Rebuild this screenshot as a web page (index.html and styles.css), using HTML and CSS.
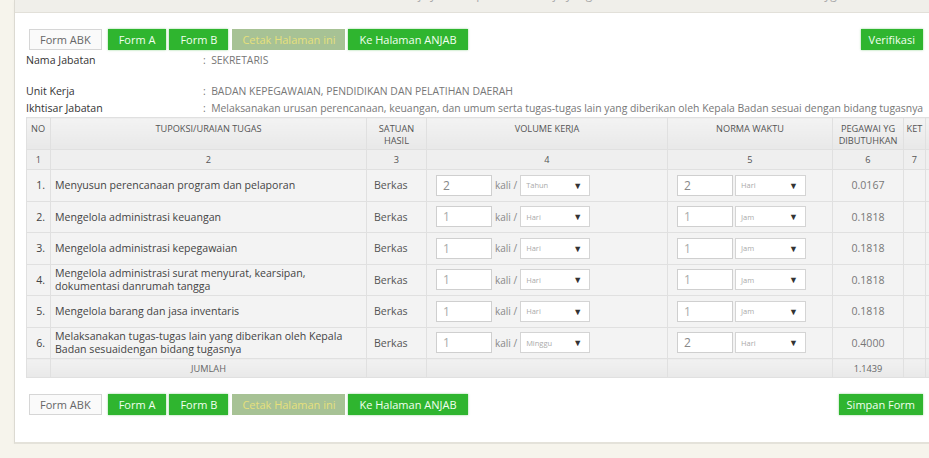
FILE: index.html
```html
<!DOCTYPE html>
<html lang="id">
<head>
  <meta charset="UTF-8">
  <title>Form ABK</title>
  <link rel="stylesheet" href="styles.css">
</head>
<body>
  <div class="panel">
    <div class="panel-head">
      <span class="head-title">Analisis Beban Kerja Jabatan pada Unit Kerja yang berlaku</span>
      <span class="head-right">Halaman ABK yg</span>
    </div>

    <div class="panel-body">
      <div class="toolbar">
        <div class="btn-group">
          <button class="btn btn-light">Form ABK</button>
          <button class="btn btn-green">Form A</button>
          <button class="btn btn-green">Form B</button>
          <button class="btn btn-muted">Cetak Halaman ini</button>
          <button class="btn btn-green">Ke Halaman ANJAB</button>
        </div>
        <button class="btn btn-green btn-side">Verifikasi</button>
      </div>

      <div class="info">
        <div class="info-row">
          <span class="info-label">Nama Jabatan</span>
          <span class="info-value">: &nbsp;SEKRETARIS</span>
        </div>
        <div class="info-row gap-top">
          <span class="info-label">Unit Kerja</span>
          <span class="info-value">: &nbsp;BADAN KEPEGAWAIAN, PENDIDIKAN DAN PELATIHAN DAERAH</span>
        </div>
        <div class="info-row">
          <span class="info-label">Ikhtisar Jabatan</span>
          <span class="info-value">: &nbsp;Melaksanakan urusan perencanaan, keuangan, dan umum serta tugas-tugas lain yang diberikan oleh Kepala Badan sesuai dengan bidang tugasnya</span>
        </div>
      </div>

      <table class="abk-table">
        <colgroup>
          <col style="width:24px">
          <col style="width:316px">
          <col style="width:60px">
          <col style="width:241px">
          <col style="width:165px">
          <col style="width:71px">
          <col style="width:22px">
          <col style="width:30px">
        </colgroup>
        <thead>
          <tr class="head-row">
            <th class="left">NO</th>
            <th>TUPOKSI/URAIAN TUGAS</th>
            <th>SATUAN<br>HASIL</th>
            <th>VOLUME KERJA</th>
            <th>NORMA WAKTU</th>
            <th>PEGAWAI YG<br>DIBUTUHKAN</th>
            <th>KET</th>
            <th></th>
          </tr>
          <tr class="num-row">
            <th>1</th>
            <th>2</th>
            <th>3</th>
            <th>4</th>
            <th>5</th>
            <th>6</th>
            <th>7</th>
            <th></th>
          </tr>
        </thead>
        <tbody id="rows"></tbody>
        <tfoot>
          <tr class="sum-row">
            <td></td>
            <td class="center">JUMLAH</td>
            <td></td>
            <td></td>
            <td></td>
            <td class="center">1.1439</td>
            <td></td>
            <td></td>
          </tr>
        </tfoot>
      </table>

      <div class="toolbar toolbar-bottom">
        <div class="btn-group">
          <button class="btn btn-light">Form ABK</button>
          <button class="btn btn-green">Form A</button>
          <button class="btn btn-green">Form B</button>
          <button class="btn btn-muted">Cetak Halaman ini</button>
          <button class="btn btn-green">Ke Halaman ANJAB</button>
        </div>
        <button class="btn btn-green btn-side">Simpan Form</button>
      </div>
    </div>
  </div>

  <script>
    const tugas = [
      { no: "1.", uraian: "Menyusun perencanaan program dan pelaporan", vol: "2", per: "Tahun", norma: "2", satuan: "Hari", pegawai: "0.0167", dark: true },
      { no: "2.", uraian: "Mengelola administrasi keuangan", vol: "1", per: "Hari", norma: "1", satuan: "Jam", pegawai: "0.1818" },
      { no: "3.", uraian: "Mengelola administrasi kepegawaian", vol: "1", per: "Hari", norma: "1", satuan: "Jam", pegawai: "0.1818" },
      { no: "4.", uraian: "Mengelola administrasi surat menyurat, kearsipan,<br>dokumentasi danrumah tangga", vol: "1", per: "Hari", norma: "1", satuan: "Jam", pegawai: "0.1818" },
      { no: "5.", uraian: "Mengelola barang dan jasa inventaris", vol: "1", per: "Hari", norma: "1", satuan: "Jam", pegawai: "0.1818" },
      { no: "6.", uraian: "Melaksanakan tugas-tugas lain yang diberikan oleh Kepala<br>Badan sesuaidengan bidang tugasnya", vol: "1", per: "Minggu", norma: "2", satuan: "Hari", pegawai: "0.4000", darkNorma: true }
    ];

    const rows = document.getElementById("rows");
    tugas.forEach(t => {
      const volClass = t.dark ? "field dark" : "field";
      const normaClass = (t.dark || t.darkNorma) ? "field dark" : "field";
      rows.innerHTML += `
        <tr>
          <td class="no">${t.no}</td>
          <td class="uraian">${t.uraian}</td>
          <td class="satuan">Berkas</td>
          <td class="vol">
            <div class="vol-wrap">
              <span class="${volClass}">${t.vol}</span>
              <span class="kali">kali /</span>
              <span class="select">${t.per}<span class="arrow">&#9660;</span></span>
            </div>
          </td>
          <td class="vol">
            <div class="vol-wrap">
              <span class="${normaClass}">${t.norma}</span>
              <span class="select wide">${t.satuan}<span class="arrow">&#9660;</span></span>
            </div>
          </td>
          <td class="center pegawai">${t.pegawai}</td>
          <td></td>
          <td></td>
        </tr>
      `;
    });
  </script>
</body>
</html>
```

FILE: styles.css
```css
body {
  margin: 0;
  background-color: #f6f4ec;
  font-family: 'Open Sans', 'Liberation Sans', sans-serif;
  font-size: 10.6px;
  color: #444;
  overflow: hidden;
}

.panel {
  margin-left: 14px;
  width: 960px;
  background-color: white;
  border-left: 1px solid #dcdad2;
  border-bottom: 2px solid #e4e2da;
  box-shadow: 0 2px 3px rgba(0, 0, 0, 0.04);
}

.panel-head {
  height: 12px;
  background-color: #f0efea;
  border-bottom: 1px solid #e2e0d9;
  overflow: hidden;
  position: relative;
  color: #aaa;
  font-size: 12px;
}

.head-title {
  position: absolute;
  left: 300px;
  top: -14px;
}

.head-right {
  position: absolute;
  left: 730px;
  top: -14px;
}

.panel-body {
  padding: 16px 0 27px 11px;
}

.toolbar {
  width: 897px;
  display: flex;
  justify-content: space-between;
  align-items: center;
}

.toolbar-bottom {
  margin-top: 16px;
}

.btn-group {
  display: flex;
  gap: 3px;
  padding-left: 3px;
}

.btn {
  font-family: 'Open Sans', 'Liberation Sans', sans-serif;
  font-size: 11px;
  line-height: 15px;
  height: 21px;
  padding: 3px 11px;
  border: none;
  border-radius: 0;
  cursor: pointer;
}

.btn-green {
  background-color: #2fb52f;
  color: #f2fff0;
  box-shadow: 0 0 2px rgba(40, 170, 40, 0.5);
}

.btn-side {
  padding: 3px 8px;
}

.btn-light {
  background-color: #fafafa;
  color: #666;
  border: 1px solid #d6d6d6;
  padding: 2px 10px;
  margin-right: 3px;
}

.btn-muted {
  background-color: #a7c295;
  color: #e6e07c;
  padding: 3px 10px;
  margin-left: 1px;
}

.info {
  margin-top: 2px;
}

.info-row {
  display: flex;
  line-height: 17px;
}

.info-row.gap-top {
  margin-top: 14px;
}

.info-label {
  width: 177px;
  flex-shrink: 0;
  color: #333;
}

.info-value {
  color: #777;
  white-space: nowrap;
  font-size: 10.4px;
}

.abk-table {
  border-collapse: collapse;
  table-layout: fixed;
  width: 929px;
  background-color: #f3f3f3;
}

.abk-table th,
.abk-table td {
  border: 1px solid #e0e0e0;
  padding: 0;
}

.abk-table th {
  font-weight: normal;
  font-size: 9.2px;
  color: #555;
  text-align: center;
}

.head-row th {
  height: 26px;
  line-height: 12px;
  background: linear-gradient(#f3f3f3, #e8e8e8);
  vertical-align: top;
  padding-top: 5px;
}

.head-row th.left {
  text-align: left;
  padding-left: 4px;
}

.num-row th {
  height: 19px;
  background-color: #efefef;
}

.abk-table tbody td {
  height: 30.5px;
}

.no {
  text-align: right;
  padding-right: 5px !important;
}

.uraian {
  padding-left: 4px !important;
  line-height: 12.5px;
  color: #444;
}

.satuan {
  padding-left: 7px !important;
  color: #555;
}

.vol {
  padding-left: 9px !important;
}

.vol-wrap {
  display: flex;
  align-items: center;
}

.field {
  width: 48px;
  height: 19px;
  line-height: 19px;
  padding-left: 6px;
  background-color: white;
  border: 1px solid #cfcfcf;
  color: #aaa;
  font-size: 12px;
}

.field.dark {
  color: #888;
}

.kali {
  margin: 0 3px;
  color: #888;
  font-size: 10px;
}

.select {
  width: 58px;
  height: 19px;
  padding: 0 5px;
  background-color: white;
  border: 1px solid #d4d4d4;
  display: flex;
  align-items: center;
  justify-content: space-between;
  font-size: 7.5px;
  color: #aaa;
}

.select.wide {
  width: 59px;
  margin-left: 2px;
}

.arrow {
  font-size: 9px;
  color: #333;
  margin-right: 2px;
}

.center {
  text-align: center;
}

.pegawai {
  color: #777;
}

.sum-row td {
  height: 18px;
  font-size: 9.2px;
  color: #666;
  background: linear-gradient(#f1f1f1, #e9e9e9);
}
```
